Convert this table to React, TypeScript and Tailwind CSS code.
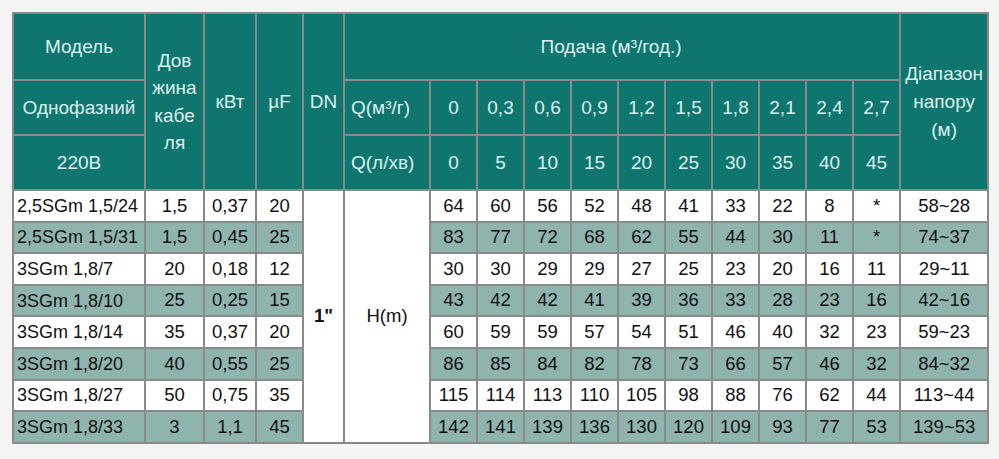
import React from "react";

type Row = {
  model: string;
  cable: string;
  kw: string;
  uf: string;
  h: (number | string)[];
  range: string;
};

const qM3 = ["0", "0,3", "0,6", "0,9", "1,2", "1,5", "1,8", "2,1", "2,4", "2,7"];
const qL = ["0", "5", "10", "15", "20", "25", "30", "35", "40", "45"];

const rows: Row[] = [
  { model: "2,5SGm 1,5/24", cable: "1,5", kw: "0,37", uf: "20", h: [64, 60, 56, 52, 48, 41, 33, 22, 8, "*"], range: "58~28" },
  { model: "2,5SGm 1,5/31", cable: "1,5", kw: "0,45", uf: "25", h: [83, 77, 72, 68, 62, 55, 44, 30, 11, "*"], range: "74~37" },
  { model: "3SGm 1,8/7", cable: "20", kw: "0,18", uf: "12", h: [30, 30, 29, 29, 27, 25, 23, 20, 16, 11], range: "29~11" },
  { model: "3SGm 1,8/10", cable: "25", kw: "0,25", uf: "15", h: [43, 42, 42, 41, 39, 36, 33, 28, 23, 16], range: "42~16" },
  { model: "3SGm 1,8/14", cable: "35", kw: "0,37", uf: "20", h: [60, 59, 59, 57, 54, 51, 46, 40, 32, 23], range: "59~23" },
  { model: "3SGm 1,8/20", cable: "40", kw: "0,55", uf: "25", h: [86, 85, 84, 82, 78, 73, 66, 57, 46, 32], range: "84~32" },
  { model: "3SGm 1,8/27", cable: "50", kw: "0,75", uf: "35", h: [115, 114, 113, 110, 105, 98, 88, 76, 62, 44], range: "113~44" },
  { model: "3SGm 1,8/33", cable: "3", kw: "1,1", uf: "45", h: [142, 141, 139, 136, 130, 120, 109, 93, 77, 53], range: "139~53" },
];

const hd = "border-2 border-[#8a8a8a] bg-[#0f766f] text-[#dcefec] text-[19px] text-center align-middle p-0";
const bd = "border-2 border-[#8a8a8a] text-[#111] text-[18.5px] text-center align-middle p-0";

export default function App() {
  return (
    <div className="w-[999px] h-[459px] bg-[#f5f5f5] pt-[12px] pl-[12px] font-['Liberation_Sans',Arial,sans-serif] leading-none">
      <table className="border-collapse table-fixed w-[975px]">
        <colgroup>
          <col className="w-[132px]" />
          <col className="w-[59px]" />
          <col className="w-[52px]" />
          <col className="w-[47px]" />
          <col className="w-[41px]" />
          <col className="w-[86px]" />
          {qM3.map((q) => (
            <col key={q} className="w-[47px]" />
          ))}
          <col className="w-[88px]" />
        </colgroup>
        <thead>
          <tr className="h-[67px]">
            <td className={hd}>Модель</td>
            <td rowSpan={3} className={`${hd} leading-[27.5px]`}>
              Дов
              <br />
              жина
              <br />
              кабе
              <br />
              ля
            </td>
            <td rowSpan={3} className={hd}>кВт</td>
            <td rowSpan={3} className={hd}>µF</td>
            <td rowSpan={3} className={hd}>DN</td>
            <td colSpan={11} className={`${hd} pr-[22px]`}>Подача (м³/год.)</td>
            <td rowSpan={3} className={`${hd} leading-[28px]`}>
              Діапазон
              <br />
              напору
              <br />
              (м)
            </td>
          </tr>
          <tr className="h-[55px]">
            <td className={hd}>Однофазний</td>
            <td className={`${hd} text-left pl-[6px]`}>Q(м³/г)</td>
            {qM3.map((q) => (
              <td key={q} className={hd}>{q}</td>
            ))}
          </tr>
          <tr className="h-[55px]">
            <td className={hd}>220В</td>
            <td className={`${hd} text-left pl-[6px]`}>Q(л/хв)</td>
            {qL.map((q) => (
              <td key={q} className={hd}>{q}</td>
            ))}
          </tr>
        </thead>
        <tbody>
          {rows.map((r, i) => {
            const bg = i % 2 === 0 ? "bg-white" : "bg-[#8fb4ae]";
            return (
              <tr key={r.model} className="h-[31.6px]">
                <td className={`${bd} ${bg} text-left pl-[3px] text-[18px]`}>{r.model}</td>
                <td className={`${bd} ${bg}`}>{r.cable}</td>
                <td className={`${bd} ${bg}`}>{r.kw}</td>
                <td className={`${bd} ${bg}`}>{r.uf}</td>
                {i === 0 && (
                  <>
                    <td rowSpan={8} className={`${bd} bg-white font-bold`}>1"</td>
                    <td rowSpan={8} className={`${bd} bg-white`}>H(m)</td>
                  </>
                )}
                {r.h.map((v, j) => (
                  <td key={j} className={`${bd} ${bg}`}>{v}</td>
                ))}
                <td className={`${bd} ${bg}`}>{r.range}</td>
              </tr>
            );
          })}
        </tbody>
      </table>
    </div>
  );
}
